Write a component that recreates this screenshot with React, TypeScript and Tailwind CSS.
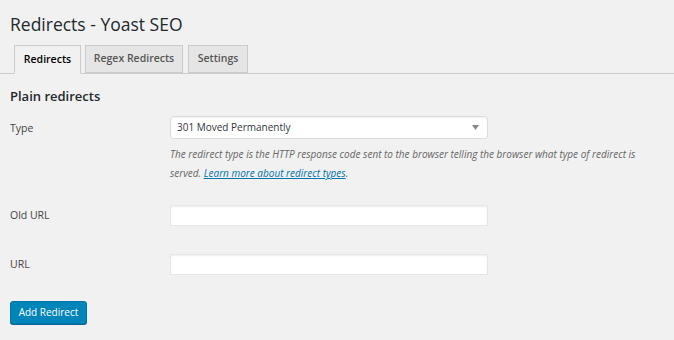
import React from "react";

export default function App() {
  const font = { fontFamily: '"Open Sans", "Noto Sans", sans-serif' };
  return (
    <div className="w-[674px] h-[340px] bg-[#f1f1f1] text-[#23282d] overflow-hidden" style={font}>
      <div className="pl-[10px] pt-[12px]">
        <h1 className="text-[17.5px] leading-[24px] font-normal text-[#23282d]">Redirects - Yoast SEO</h1>
      </div>
      <div className="mt-[9px] flex items-end border-b border-[#ccc] pl-[14px] h-[29px]">
        <div className="h-[29px] -mb-px w-[67px] justify-center flex items-center border border-[#ccc] border-b-[#f1f1f1] bg-[#f1f1f1] text-[10.5px] font-semibold text-[#000]">Redirects</div>
        <div className="ml-[4px] h-[28px] w-[98px] justify-center flex items-center border border-[#ccc] bg-[#e5e5e5] text-[10.5px] font-semibold text-[#555]">Regex Redirects</div>
        <div className="ml-[5px] h-[28px] w-[60px] justify-center flex items-center border border-[#ccc] bg-[#e5e5e5] text-[10.5px] font-semibold text-[#555]">Settings</div>
      </div>
      <div className="pl-[10px]">
        <h2 className="mt-[13px] text-[13px] leading-[18px] font-semibold text-[#23282d]">Plain redirects</h2>
        <div className="mt-[11px] flex">
          <div className="w-[160px] pt-[5px] text-[10.5px] text-[#444]">Type</div>
          <div className="flex flex-col">
            <div className="w-[318px] h-[23px] bg-white border border-[#ddd] rounded-[3px] shadow-[inset_0_1px_2px_rgba(0,0,0,0.07)] flex items-center justify-between pl-[6px] pr-[8px] text-[10px] text-[#32373c]">
              <span>301 Moved Permanently</span>
              <svg width="7" height="5" viewBox="0 0 7 5"><path d="M0 0h7L3.5 5z" fill="#888" /></svg>
            </div>
            <p className="mt-[6px] w-[490px] text-[10px] leading-[19px] italic text-[#666]">
              The redirect type is the HTTP response code sent to the browser telling the browser what type of redirect is served.{" "}
              <a className="text-[#0073aa] underline">Learn more about redirect types</a>.
            </p>
          </div>
        </div>
        <div className="mt-[22px] flex items-center">
          <div className="w-[160px] text-[10.5px] text-[#444]">Old URL</div>
          <div className="w-[318px] h-[21px] bg-white border border-[#e6e6e6] shadow-[inset_0_1px_2px_rgba(0,0,0,0.07)]" />
        </div>
        <div className="mt-[28px] flex items-center">
          <div className="w-[160px] text-[10.5px] text-[#444]">URL</div>
          <div className="w-[318px] h-[21px] bg-white border border-[#e6e6e6] shadow-[inset_0_1px_2px_rgba(0,0,0,0.07)]" />
        </div>
        <button className="mt-[26px] w-[77px] h-[23px] bg-[#0085ba] border border-[#0073aa] rounded-[3px] text-white text-[10px] shadow-[0_1px_0_#006799]">Add Redirect</button>
      </div>
    </div>
  );
}
